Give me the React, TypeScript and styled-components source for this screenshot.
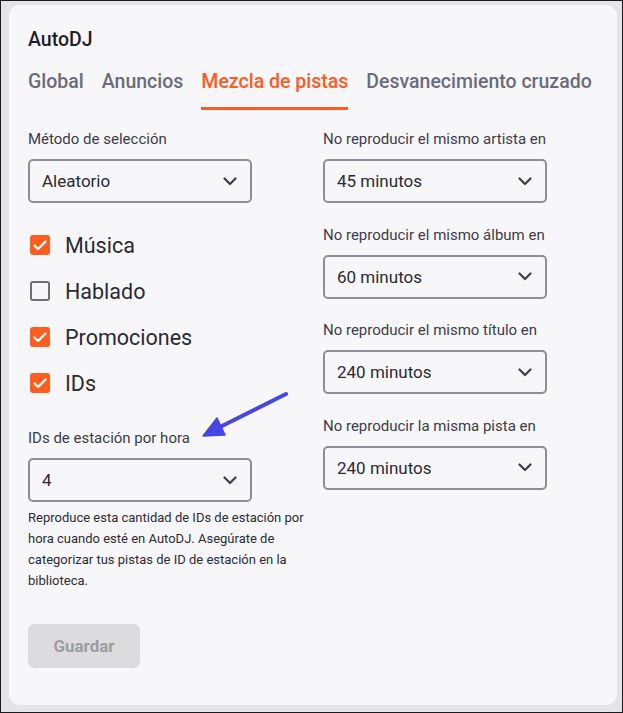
import React from "react";
import styled, { createGlobalStyle } from "styled-components";

const Global = createGlobalStyle`
  html, body { margin: 0; padding: 0; background: #e4e4e8; }
  * { box-sizing: border-box; }
  body { font-family: Roboto, "Noto Sans", sans-serif; }
`;

const Frame = styled.div`
  width: 623px;
  height: 713px;
  border: 1px solid #1b1b1b;
  padding: 4px 5px 7px 8px;
  background: #e4e4e8;
`;

const Card = styled.div`
  position: relative;
  height: 100%;
  background: #f7f7fa;
  border-radius: 11px;
  padding: 23px 19px 0 19px;
`;

const Title = styled.h2`
  margin: 0;
  font-size: 19.5px;
  line-height: 24px;
  font-weight: 500;
  color: #1f1f2a;
`;

const Tabs = styled.div`
  display: flex;
  gap: 18px;
  margin-top: 18px;
`;

const Tab = styled.div<{ $active?: boolean }>`
  font-size: 19.5px;
  line-height: 24px;
  font-weight: 500;
  color: ${(p) => (p.$active ? "#ff5b1f" : "#6c6b7a")};
  padding-bottom: 13px;
  border-bottom: 3px solid ${(p) => (p.$active ? "#ff5b1f" : "transparent")};
  white-space: nowrap;
`;

const Columns = styled.div`
  display: grid;
  grid-template-columns: 275px 223px;
  column-gap: 20px;
  margin-top: 19px;
`;

const Column = styled.div`
  display: flex;
  flex-direction: column;
`;

const Label = styled.div<{ $spaced?: boolean }>`
  font-size: 15px;
  line-height: 20px;
  color: #3c3b4a;
  white-space: nowrap;
  margin-bottom: 10px;
  margin-top: ${(p) => (p.$spaced ? "30px" : "0")};
`;

const Field = styled.div`
  margin-bottom: 21.5px;
`;

const SelectBox = styled.div`
  width: 224px;
  height: 44px;
  border: 2px solid #8f8e97;
  border-radius: 5px;
  display: flex;
  align-items: center;
  justify-content: space-between;
  padding: 0 13px 0 12px;
  font-size: 17px;
  color: #2a2a35;
`;

const Checks = styled.div`
  display: flex;
  flex-direction: column;
  gap: 16px;
  margin-top: 27px;
  margin-left: 2px;
`;

const CheckRow = styled.label`
  display: flex;
  align-items: center;
  gap: 15px;
  height: 30px;
  font-size: 21.5px;
  color: #2a2a35;
`;

const Box = styled.span<{ $checked?: boolean }>`
  width: 20px;
  height: 20px;
  border-radius: 3px;
  display: inline-flex;
  align-items: center;
  justify-content: center;
  background: ${(p) => (p.$checked ? "#ff5c1f" : "transparent")};
  border: ${(p) => (p.$checked ? "none" : "2px solid #6f6e78")};
`;

const Help = styled.p`
  margin: 5px 0 0 0;
  font-size: 13px;
  line-height: 21px;
  color: #2b2b38;
  width: 282px;
`;

const SaveButton = styled.button`
  margin-top: 33px;
  width: 112px;
  height: 44px;
  border: none;
  border-radius: 6px;
  background: #dcdcdf;
  color: #9c9ca2;
  font-family: Roboto, sans-serif;
  font-weight: 700;
  font-size: 17px;
`;

const Arrow = styled.svg`
  position: absolute;
  left: 185px;
  top: 380px;
`;

const Chevron = () => (
  <svg width="14" height="9" viewBox="0 0 14 9">
    <path d="M1.5 1.5 L7 7 L12.5 1.5" fill="none" stroke="#3d3c48" strokeWidth="2.2" strokeLinecap="round" strokeLinejoin="round" />
  </svg>
);

const Check = () => (
  <svg width="14" height="11" viewBox="0 0 14 11">
    <path d="M1.5 5.5 L5 9 L12.5 1.5" fill="none" stroke="#fff" strokeWidth="2.4" strokeLinecap="round" strokeLinejoin="round" />
  </svg>
);

const Select = ({ value }: { value: string }) => (
  <SelectBox>
    <span>{value}</span>
    <Chevron />
  </SelectBox>
);

const rightFields = [
  ["No reproducir el mismo artista en", "45 minutos"],
  ["No reproducir el mismo álbum en", "60 minutos"],
  ["No reproducir el mismo título en", "240 minutos"],
  ["No reproducir la misma pista en", "240 minutos"],
];

const checks: [string, boolean][] = [
  ["Música", true],
  ["Hablado", false],
  ["Promociones", true],
  ["IDs", true],
];

export default function App() {
  return (
    <>
      <Global />
      <Frame>
        <Card>
          <Title>AutoDJ</Title>
          <Tabs>
            <Tab>Global</Tab>
            <Tab>Anuncios</Tab>
            <Tab $active>Mezcla de pistas</Tab>
            <Tab>Desvanecimiento cruzado</Tab>
          </Tabs>
          <Columns>
            <Column>
              <Label>Método de selección</Label>
              <Select value="Aleatorio" />
              <Checks>
                {checks.map(([name, on]) => (
                  <CheckRow key={name}>
                    <Box $checked={on}>{on && <Check />}</Box>
                    {name}
                  </CheckRow>
                ))}
              </Checks>
              <Label $spaced>IDs de estación por hora</Label>
              <Select value="4" />
              <Help>
                Reproduce esta cantidad de IDs de estación por hora cuando esté en AutoDJ. Asegúrate de categorizar tus pistas de ID de estación en la biblioteca.
              </Help>
              <SaveButton>Guardar</SaveButton>
            </Column>
            <Column>
              {rightFields.map(([label, value]) => (
                <Field key={label}>
                  <Label>{label}</Label>
                  <Select value={value} />
                </Field>
              ))}
            </Column>
          </Columns>
          <Arrow width="100" height="60" viewBox="0 0 100 60">
            <line x1="92" y1="9" x2="24" y2="43" stroke="#4646e6" strokeWidth="4" strokeLinecap="round" />
            <polygon points="9,51 31,50 23,33" fill="#4646e6" stroke="#4646e6" strokeWidth="1.5" strokeLinejoin="round" />
          </Arrow>
        </Card>
      </Frame>
    </>
  );
}
